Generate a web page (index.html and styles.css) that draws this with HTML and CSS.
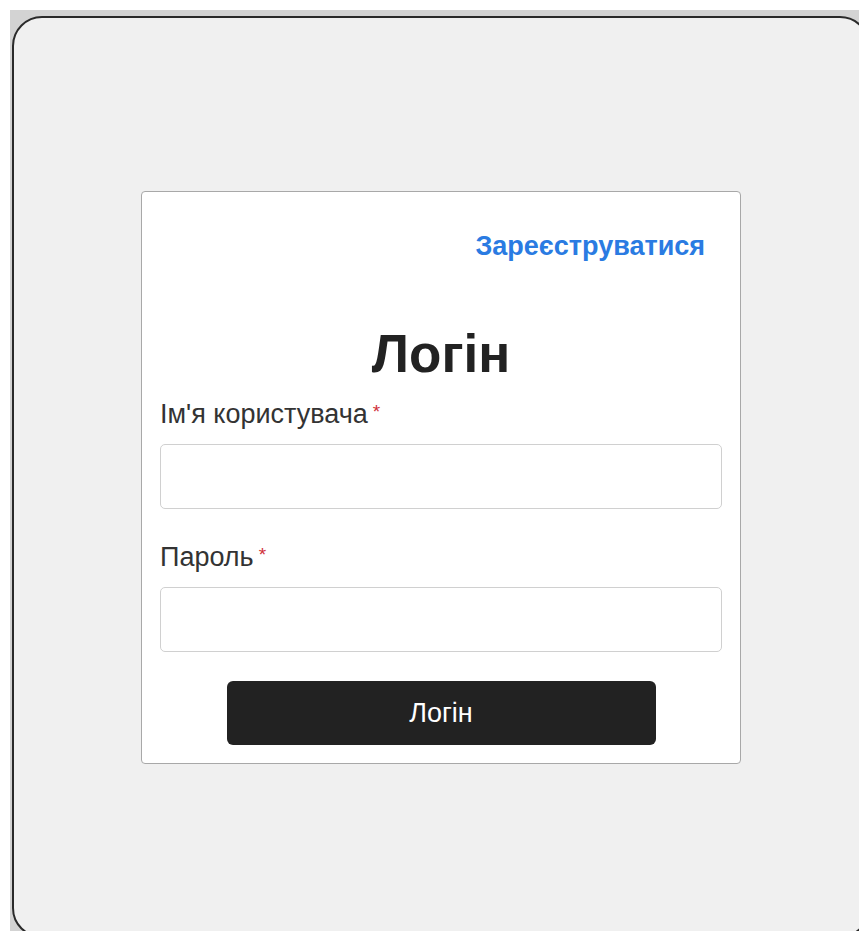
FILE: index.html
```html
<!DOCTYPE html>
<html lang="uk">
<head>
<meta charset="utf-8">
<title>Логін</title>
<link rel="stylesheet" href="styles.css">
</head>
<body>
<div class="screen">
  <div class="frame">
    <form class="card">
      <div class="card-top">
        <a class="register-link" href="#">Зареєструватися</a>
      </div>
      <h1 class="title">Логін</h1>
      <div class="field">
        <label class="field-label" for="username">Ім'я користувача<span class="required">*</span></label>
        <input class="field-input" id="username" type="text">
      </div>
      <div class="field">
        <label class="field-label" for="password">Пароль<span class="required">*</span></label>
        <input class="field-input" id="password" type="password">
      </div>
      <div class="actions">
        <button class="submit" type="button">Логін</button>
      </div>
    </form>
  </div>
</div>
</body>
</html>
```

FILE: styles.css
```css
html, body {
  margin: 0;
  padding: 0;
  background: #ffffff;
  overflow: hidden;
}

body {
  padding: 10px 0 0 10px;
  font-family: "Liberation Sans", Arial, sans-serif;
}

.screen {
  background: #d3d3d3;
  padding: 6px 0 0 2px;
  width: 880px;
  height: 960px;
}

.frame {
  box-sizing: border-box;
  width: 858px;
  height: 922px;
  border: 2px solid #2a2a2a;
  border-radius: 30px;
  background: #f0f0f0;
  display: flex;
  flex-direction: column;
  align-items: center;
  padding-top: 173px;
}

.card {
  box-sizing: border-box;
  width: 600px;
  background: #ffffff;
  border: 1px solid #a8a8a8;
  border-radius: 4px;
  padding: 38px 18px 18px 18px;
  display: flex;
  flex-direction: column;
}

.card-top {
  display: flex;
  justify-content: flex-end;
  padding-right: 17px;
  line-height: 32px;
}

.register-link {
  color: #2a7be2;
  font-weight: bold;
  font-size: 27px;
  text-decoration: none;
}

.title {
  margin: 62px 0 0 0;
  text-align: center;
  font-size: 53px;
  line-height: 60px;
  font-weight: bold;
  color: #222222;
}

.field {
  display: flex;
  flex-direction: column;
  margin-top: 14px;
}

.field + .field {
  margin-top: 32px;
}

.field-label {
  font-size: 27px;
  line-height: 32px;
  color: #333333;
  margin-bottom: 14px;
}

/* small raised star that keeps the label's line height */
.required {
  color: #d0313a;
  font-size: 19px;
  line-height: 0;
  margin-left: 5px;
  vertical-align: 5px;
}

.field-input {
  box-sizing: border-box;
  height: 65px;
  width: 100%;
  border: 1px solid #d0d0d0;
  border-radius: 5px;
  background: #ffffff;
  font-size: 24px;
  padding: 0 12px;
  outline: none;
}

.actions {
  display: flex;
  justify-content: center;
  margin-top: 29px;
}

.submit {
  width: 429px;
  height: 64px;
  border: none;
  border-radius: 6px;
  background: #222222;
  color: #ffffff;
  font-family: "Liberation Sans", Arial, sans-serif;
  font-size: 27px;
  cursor: pointer;
}
```
